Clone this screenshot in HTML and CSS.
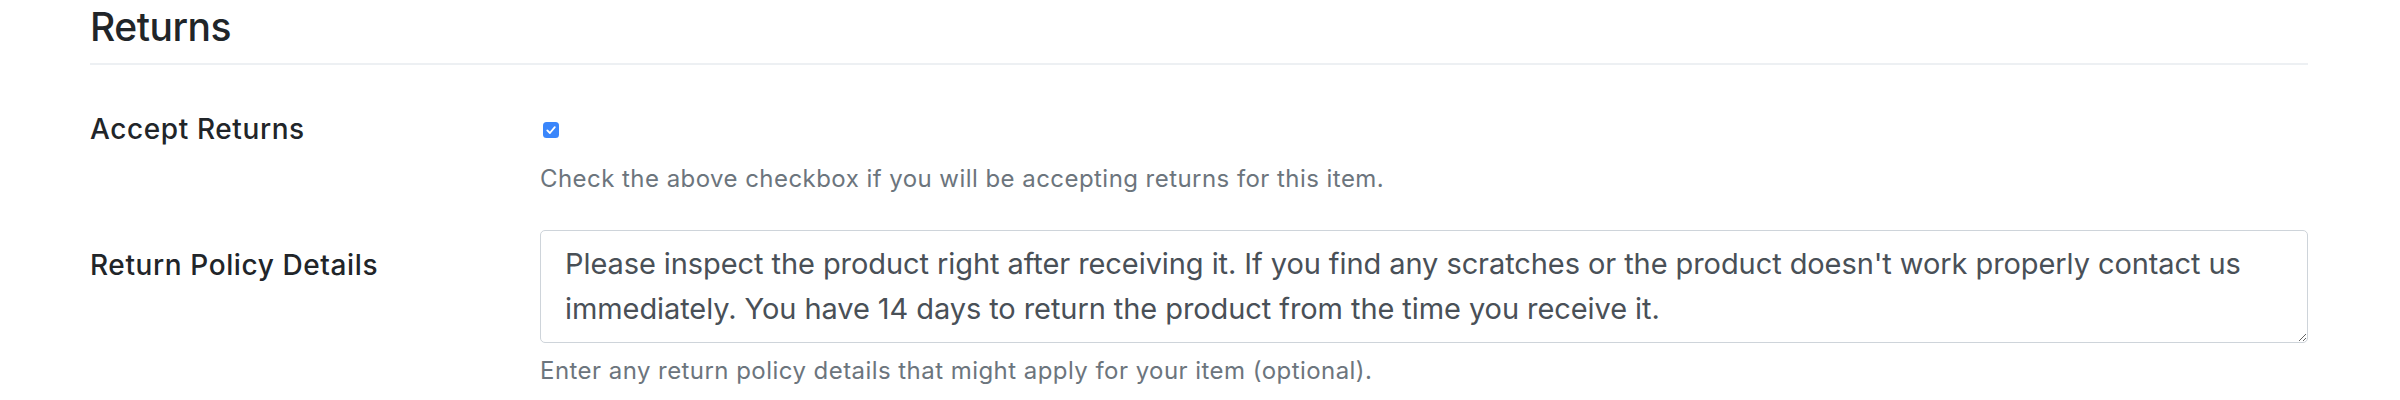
FILE: index.html
```html
<!DOCTYPE html>
<html lang="en">
<head>
<meta charset="utf-8">
<title>Returns</title>
<link rel="stylesheet" href="styles.css">
</head>
<body>
<div class="page">
  <h2 class="title">Returns</h2>
  <div class="rule"></div>
  <div class="row row-accept">
    <div class="label label-accept">Accept Returns</div>
    <div class="control">
      <span class="check"><svg width="16" height="16" viewBox="0 0 16 16"><path d="M4.3 8.4 L6.9 11 L11.8 5.2" fill="none" stroke="#fff" stroke-width="1.8" stroke-linecap="round" stroke-linejoin="round"/></svg></span>
      <p class="help help-accept">Check the above checkbox if you will be accepting returns for this item.</p>
    </div>
  </div>
  <div class="row row-policy">
    <div class="label label-policy">Return Policy Details</div>
    <div class="control">
      <textarea class="area">Please inspect the product right after receiving it. If you find any scratches or the product doesn't work properly contact us immediately. You have 14 days to return the product from the time you receive it.</textarea>
      <p class="help help-policy">Enter any return policy details that might apply for your item (optional).</p>
    </div>
  </div>
</div>
</body>
</html>
```
FILE: styles.css
```css
html, body {
  margin: 0;
  padding: 0;
  background: #ffffff;
}
body {
  font-family: Inter, "Liberation Sans", Arial, sans-serif;
  color: #212529;
}
.page {
  padding: 3px 92px 0 90px;
}
.title {
  margin: 0;
  font-size: 39px;
  line-height: 48px;
  font-weight: 500;
  letter-spacing: -0.5px;
}
.rule {
  margin-top: 12px;
  height: 0;
  border-top: 2px solid #edf0f3;
}
.row {
  display: grid;
  grid-template-columns: 450px 1fr;
}
.row-accept {
  margin-top: 44px;
}
.row-policy {
  margin-top: 33px;
}
.label {
  font-size: 28px;
  line-height: 40px;
  font-weight: 500;
  letter-spacing: 0.6px;
}
.label-policy {
  margin-top: 15px;
}
.control {
  display: flex;
  flex-direction: column;
  align-items: flex-start;
}
.check {
  display: block;
  width: 16px;
  height: 16px;
  margin-top: 13px;
  margin-left: 3px;
  border-radius: 3.5px;
  background: #3a86fb;
}
.check svg {
  display: block;
}
.help {
  margin: 0;
  font-size: 24px;
  line-height: 36px;
  color: #6c757d;
  letter-spacing: 0.45px;
}
.help-accept {
  margin-top: 23px;
}
.help-policy {
  margin-top: 10px;
}
.area {
  box-sizing: border-box;
  width: 100%;
  height: 113px;
  margin: 0;
  padding: 11px 24px;
  border: 1px solid #ced4da;
  border-radius: 5px;
  font-family: Inter, "Liberation Sans", Arial, sans-serif;
  font-size: 29px;
  line-height: 44.5px;
  letter-spacing: -0.08px;
  color: #495057;
  background: #fff;
  resize: vertical;
  overflow: hidden;
}
```
